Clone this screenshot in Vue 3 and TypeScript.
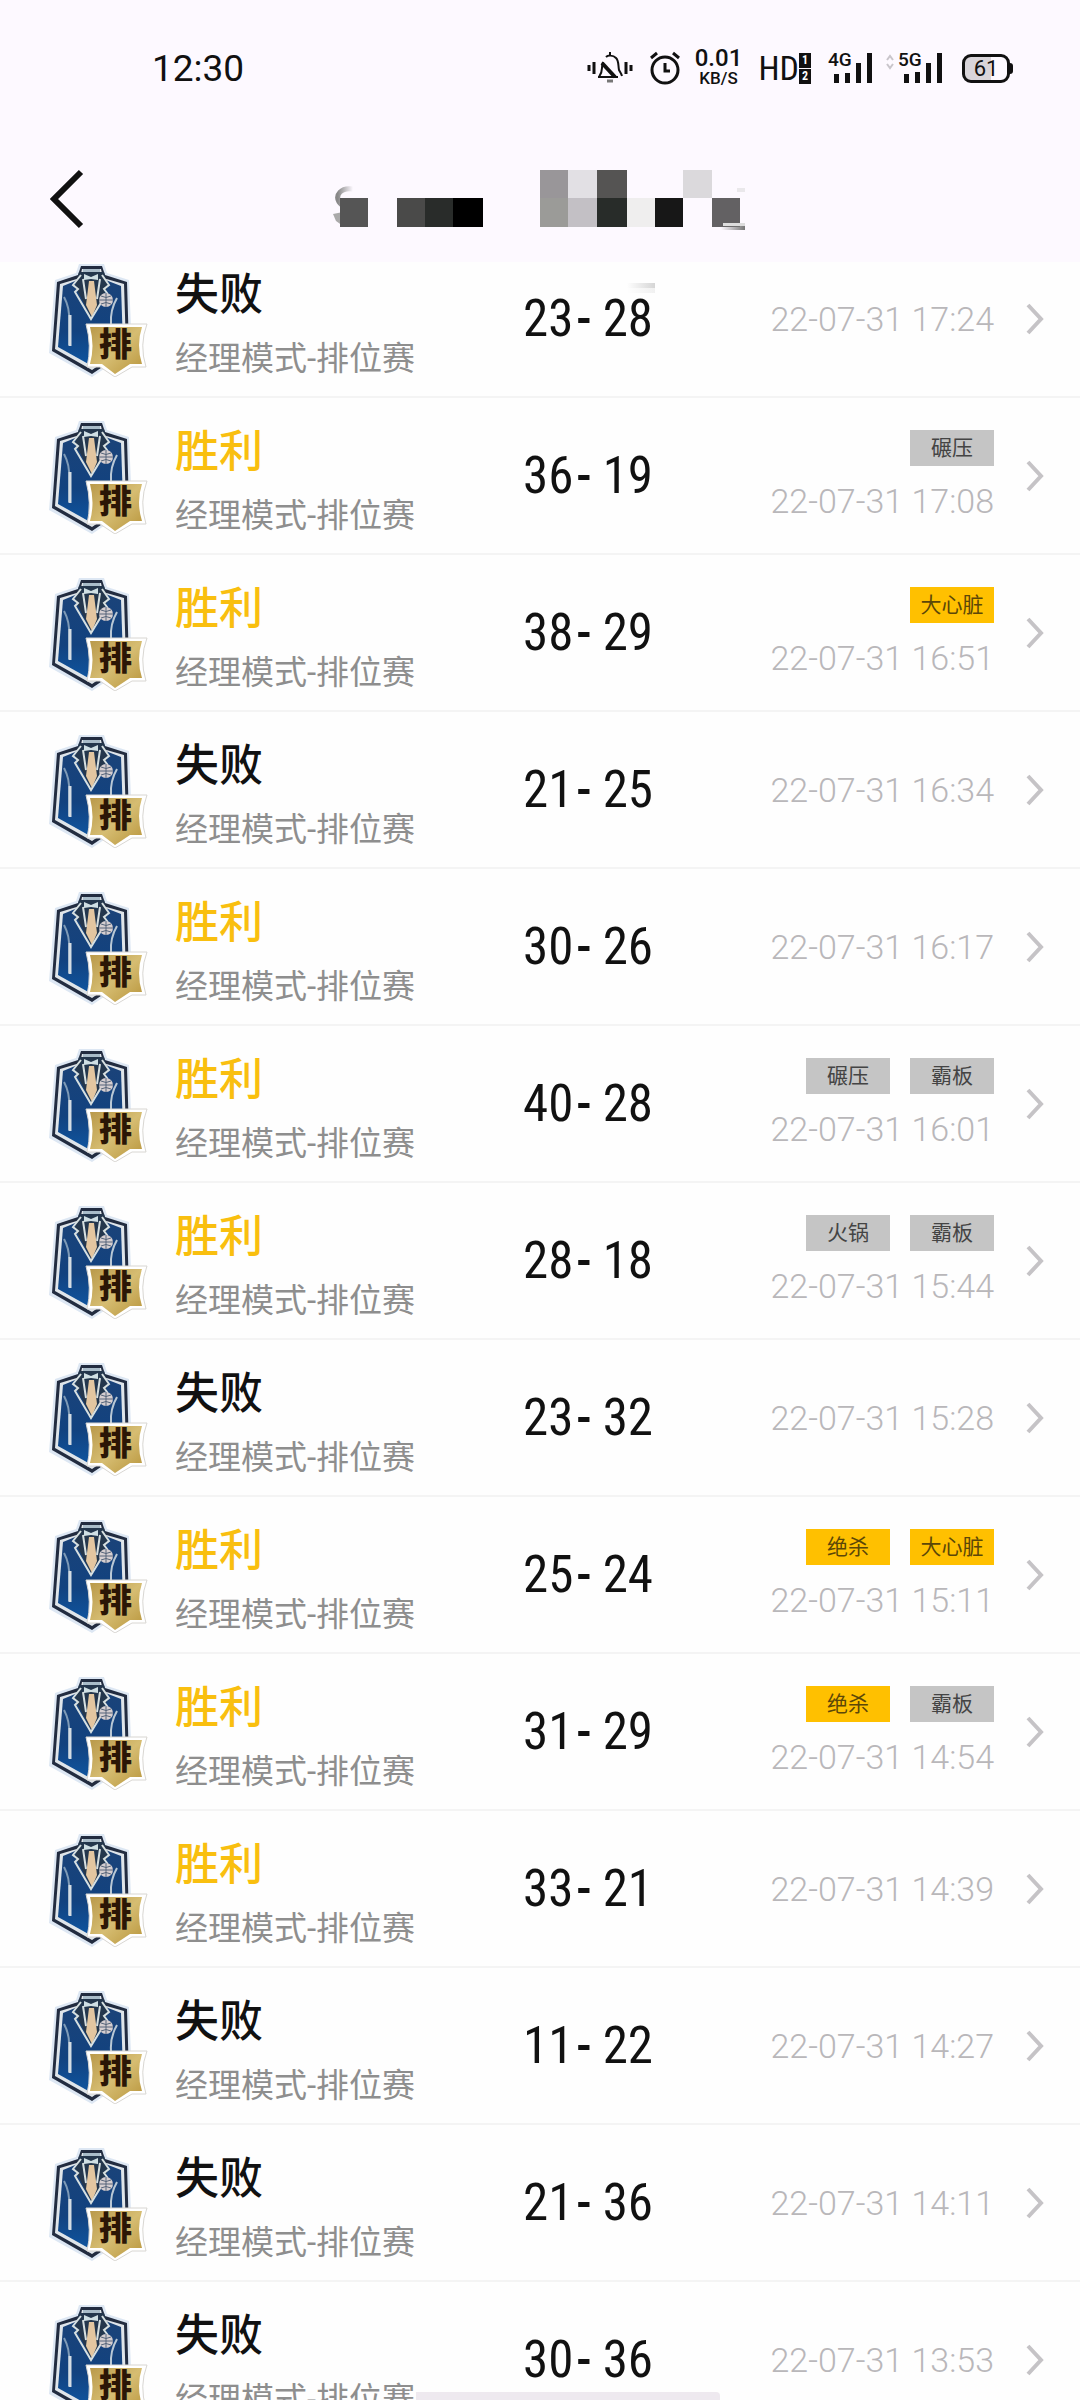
<script setup lang="ts">
interface Tag {
  label: string
  gold?: boolean
}
interface Match {
  win: boolean
  home: number
  away: number
  time: string
  tags: Tag[]
}

const crush: Tag = { label: '碾压' }
const board: Tag = { label: '霸板' }
const block: Tag = { label: '火锅' }
const heart: Tag = { label: '大心脏', gold: true }
const clutch: Tag = { label: '绝杀', gold: true }

const match = (win: boolean, home: number, away: number, time: string, tags: Tag[] = []): Match => ({
  win,
  home,
  away,
  time,
  tags,
})

const matches: Match[] = [
  match(false, 23, 28, '17:24'),
  match(true, 36, 19, '17:08', [crush]),
  match(true, 38, 29, '16:51', [heart]),
  match(false, 21, 25, '16:34'),
  match(true, 30, 26, '16:17'),
  match(true, 40, 28, '16:01', [crush, board]),
  match(true, 28, 18, '15:44', [block, board]),
  match(false, 23, 32, '15:28'),
  match(true, 25, 24, '15:11', [clutch, heart]),
  match(true, 31, 29, '14:54', [clutch, board]),
  match(true, 33, 21, '14:39'),
  match(false, 11, 22, '14:27'),
  match(false, 21, 36, '14:11'),
  match(false, 30, 36, '13:53'),
]
</script>

<template>
  <div class="screen">
    <header class="top">
      <div class="status">
        <time class="clock">12:30</time>
        <div class="indicators">
          <svg class="bell" width="46" height="34" viewBox="0 0 46 34" fill="none" stroke="#111" aria-label="静音">
            <path d="M2 14v6M44 14v6" stroke-width="3" />
            <path d="M7 11v12M39 11v12" stroke-width="3" />
            <path d="M11 26h20M12 26c2-3 3-5 3-9c0-2 0-4 1-6M19 6c2-2 7-2 10 1c3 3 2 7 3 12c1 2 2 3 3 6M23 1v4" stroke-width="2" />
            <path d="M15 12L28 26" stroke-width="4" />
            <path d="M20 30h6" stroke="#777" stroke-width="3" />
          </svg>
          <svg class="alarm" width="32" height="34" viewBox="0 0 32 34" fill="none" stroke="#111" aria-label="闹钟">
            <circle cx="16" cy="19" r="13" stroke-width="3" />
            <path d="M2 7L8 2M30 7L24 2M16 12v8h5" stroke-width="3" />
          </svg>
          <div class="speed"><span>0.01</span><small>KB/S</small></div>
          <div class="hd"><span>HD</span><span class="sims"><b>1</b><b>2</b></span></div>
          <div class="signal">
            <span>4G</span>
            <svg width="46" height="32" viewBox="0 0 46 32" fill="#111" aria-hidden="true">
              <path d="M6 22h5v9H6zM17 21h5v10h-5zM28 11h5v20h-5zM39 1h5v30h-5z" />
            </svg>
          </div>
          <div class="signal five">
            <svg class="arrows" width="8" height="16" viewBox="0 0 8 16" fill="none" stroke="#c9c5cb" stroke-width="2" aria-hidden="true">
              <path d="M1 6L4 2L7 6M1 10L4 14L7 10" />
            </svg>
            <span>5G</span>
            <svg width="46" height="32" viewBox="0 0 46 32" fill="#111" aria-hidden="true">
              <path d="M6 22h5v9H6zM17 20h5v11h-5zM28 11h5v20h-5zM39 1h5v30h-5z" />
            </svg>
          </div>
          <div class="battery">61</div>
        </div>
      </div>
      <nav class="bar">
        <button class="back" type="button" aria-label="返回">
          <svg width="34" height="60" viewBox="0 0 34 60" fill="none" stroke="#111" stroke-width="6">
            <path d="M31 3L4 30L31 57" />
          </svg>
        </button>
        <svg class="title" width="414" height="124" viewBox="0 0 414 124" shape-rendering="crispEdges" aria-hidden="true">
          <defs>
            <linearGradient id="fadeL" x1="0" x2="1">
              <stop offset="0" stop-color="#888" />
              <stop offset="1" stop-color="#888" stop-opacity="0" />
            </linearGradient>
            <linearGradient id="fadeR" x1="0" x2="1">
              <stop offset="0" stop-color="#777" stop-opacity="0" />
              <stop offset="1" stop-color="#777" />
            </linearGradient>
          </defs>
          <path d="M20 20C8 18 2 26 6 33C8 37 14 38 16 40" fill="none" stroke="url(#fadeL)" stroke-width="5" shape-rendering="auto" />
          <path d="M0 45L10 43V57L3 52z" fill="#aaa" shape-rendering="auto" />
          <path d="M7 29h28v29H7z" fill="#555" />
          <path d="M64 29h28v29H64z" fill="#4a4a49" />
          <path d="M92 29h28v29H92z" fill="#292c2a" />
          <path d="M120 29h30v29H120z" fill="#000" />
          <path d="M207 1h28v28H207z" fill="#999699" />
          <path d="M207 29h28v29H207z" fill="#9b9b98" />
          <path d="M235 1h29v28H235z" fill="#e2e0e4" />
          <path d="M235 29h29v29H235z" fill="#c3c0c5" />
          <path d="M264 1h30v28H264z" fill="#555453" />
          <path d="M264 29h30v29H264z" fill="#282c29" />
          <path d="M294 29h28v29H294z" fill="#efeeee" />
          <path d="M322 29h28v29H322z" fill="#171717" />
          <path d="M350 1h29v28H350z" fill="#dbd9dc" />
          <path d="M379 29h28v29H379z" fill="#636163" />
          <path d="M390 54h22v3H390z" fill="#ddd" />
          <path d="M388 57h24v4H388z" fill="url(#fadeR)" />
          <path d="M404 19h8v4H404z" fill="#eae8eb" />
          <path d="M294 114h28v5H294z" fill="url(#fadeR)" opacity="0.3" />
          <path d="M294 119h28v5H294z" fill="url(#fadeR)" opacity="0.1" />
        </svg>
      </nav>
    </header>

    <svg class="symbols" width="0" height="0" aria-hidden="true">
      <defs>
        <linearGradient id="suit" x1="0" y1="0" x2="0" y2="1">
          <stop offset="0" stop-color="#1b4379" />
          <stop offset="0.6" stop-color="#12427f" />
          <stop offset="1" stop-color="#0f55a0" />
        </linearGradient>
        <linearGradient id="gold" x1="0" y1="0" x2="1" y2="1">
          <stop offset="0" stop-color="#b9994a" />
          <stop offset="0.5" stop-color="#d6bd72" />
          <stop offset="1" stop-color="#b8953c" />
        </linearGradient>
        <symbol id="badge" viewBox="0 0 100 114">
          <path d="M31 1H56L59 10L81 17L84 87L44 114L1 90L7 17L28 10z" fill="#dde7f3" />
          <path d="M33 3H54L57 12L79 19L81 86L44 111L4 88L9 19L30 12z" fill="#222c40" />
          <path d="M34 6H53L55 15L76 21L78 84L44 107L7 86L12 21L32 15z" fill="#dfe5ea" />
          <path d="M32 16L15 23L10 84L44 103L75 82L73 23L55 16z" fill="url(#suit)" />
          <path d="M31 9h25l4 14l-16 33L27 23z" fill="#24374d" />
          <path d="M35 6h17v3H35z" fill="#a9bcc9" />
          <path d="M41 18h5L49 42L44 54L38 42z" fill="#e3c6a0" />
          <path d="M36 11l7 3l7-3v6l-7 -1l-7 1z" fill="#cfdfe4" />
          <path d="M33 12L25 22L30 26L27 29L43 56L59 30L56 26L61 22L54 12M35 16L38 36M52 16L49 36" fill="none" stroke="#d7e0e1" stroke-width="2" />
          <path d="M16 34Q22 45 21 58V82" fill="none" stroke="#7f9bb7" stroke-width="2" />
          <path d="M22 52v31" stroke="#d4dce3" stroke-width="3" />
          <path d="M69 35Q62 47 63 61" fill="none" stroke="#b9c8d5" stroke-width="2" />
          <circle cx="58" cy="37" r="7" fill="#d5ced0" />
          <path d="M51 37h14M58 30v14M53 33q5 3 10 0M53 41q5-3 10 0" fill="none" stroke="#56657a" stroke-width="1" />
          <path d="M38 61H99Q91 82 98 104H84L67 114L52 104H39Q44 83 38 61z" fill="#fff" stroke="#d8d6d2" stroke-width="1" />
          <path d="M42 64H94Q88 82 94 101H82L67 111L54 101H42Q47 83 42 64z" fill="url(#gold)" />
        </symbol>
      </defs>
    </svg>

    <main>
      <ul class="list">
        <li v-for="m in matches" :key="m.time">
          <a class="row" href="#">
            <span class="emblem">
              <svg width="100" height="114" aria-hidden="true"><use href="#badge" /></svg>
              <span class="rank">排</span>
            </span>
            <span class="info">
              <strong :class="{ win: m.win }">{{ m.win ? '胜利' : '失败' }}</strong>
              <span class="mode">经理模式-排位赛</span>
            </span>
            <span class="score"><span>{{ m.home }}</span><i>-</i><span>{{ m.away }}</span></span>
            <span class="meta">
              <span v-if="m.tags.length" class="tags">
                <span v-for="t in m.tags" :key="t.label" class="tag" :class="{ gold: t.gold }">{{ t.label }}</span>
              </span>
              <time>22-07-31 {{ m.time }}</time>
            </span>
            <svg class="arrow" width="18" height="32" viewBox="0 0 18 32" fill="none" stroke="#c5c3c6" stroke-width="4" aria-hidden="true">
              <path d="M2 2L15 16L2 30" />
            </svg>
          </a>
        </li>
      </ul>
    </main>
    <div class="home" />
  </div>
</template>

<style>
body {
  margin: 0;
}
</style>

<style scoped>
.screen {
  position: relative;
  height: 100vh;
  overflow: hidden;
  display: flex;
  flex-direction: column;
  background: #fefefe;
  color: #111;
  font-family: Roboto, "Noto Sans CJK SC", sans-serif;
}
.top {
  position: relative;
  z-index: 1;
  flex: none;
  background: #fdf9ff;
}
.status {
  display: flex;
  align-items: center;
  justify-content: space-between;
  height: 136px;
  padding: 0 70px 0 152px;
}
.clock {
  font-size: 37px;
}
.indicators {
  display: flex;
  align-items: center;
  height: 40px;
}
.alarm {
  margin-left: 16px;
}
.speed {
  display: flex;
  flex-direction: column;
  align-items: center;
  width: 48px;
  margin-left: 14px;
  font-size: 24px;
  font-weight: 500;
  line-height: 20px;
}
.speed small {
  font-size: 17px;
  line-height: 20px;
}
.hd {
  display: flex;
  align-items: center;
  margin-left: 16px;
  font-family: "Roboto Condensed", Roboto, sans-serif;
  font-size: 34px;
  line-height: 36px;
}
.sims {
  display: flex;
  flex-direction: column;
  gap: 1px;
}
.sims b {
  width: 12px;
  height: 15px;
  background: #111;
  color: #fff;
  font-size: 12px;
  line-height: 15px;
  text-align: center;
}
.signal {
  position: relative;
  display: flex;
  margin-left: 17px;
}
.signal span {
  position: absolute;
  top: 0;
  left: 0;
  font-size: 19px;
  font-weight: 500;
  line-height: 16px;
}
.five {
  margin-left: 24px;
}
.arrows {
  position: absolute;
  top: 2px;
  left: -12px;
}
.battery {
  position: relative;
  box-sizing: border-box;
  width: 48px;
  height: 29px;
  margin-left: 18px;
  border: 3px solid #111;
  border-radius: 9px;
  background: linear-gradient(to right, #d9d5da 61%, transparent 61%);
  font-size: 22px;
  line-height: 24px;
  text-align: center;
}
.battery::after {
  content: "";
  position: absolute;
  top: 6px;
  right: -6px;
  width: 3px;
  height: 11px;
  border-radius: 0 3px 3px 0;
  background: #111;
}
.bar {
  display: grid;
  grid-template-columns: 1fr auto 1fr;
  align-items: start;
  height: 126px;
}
.back {
  justify-self: start;
  display: flex;
  margin: 33px 0 0 50px;
  padding: 0;
  border: 0;
  background: none;
}
.title {
  margin-top: 33px;
}
.symbols {
  position: absolute;
}
main {
  flex: 1;
  min-height: 0;
  overflow: hidden;
}
.list {
  margin: -21px 0 0;
  padding: 0;
  list-style: none;
}
.row {
  display: grid;
  grid-template-columns: 100px 1fr 132px 1fr 18px;
  align-items: center;
  box-sizing: border-box;
  height: 157px;
  padding: 0 36px 0 48px;
  border-bottom: 2px solid #f4f4f4;
  color: inherit;
  text-decoration: none;
}
.emblem {
  position: relative;
  height: 112px;
}
.rank {
  position: absolute;
  top: 64px;
  left: 51px;
  color: #2b1606;
  font-size: 33px;
  font-weight: 900;
  line-height: 36px;
}
.info {
  display: flex;
  flex-direction: column;
  gap: 20px;
  padding: 12px 0 0 27px;
}
.info strong {
  font-size: 44px;
  font-weight: 500;
  line-height: 48px;
}
.info .win {
  color: #f9bf0f;
}
.mode {
  color: #8e8e8e;
  font-size: 33px;
  line-height: 40px;
  white-space: nowrap;
}
.score {
  display: grid;
  grid-template-columns: 53px 16px 1fr;
  padding-left: 2px;
  font-family: "Roboto Condensed", Roboto, sans-serif;
  font-size: 51px;
  line-height: 60px;
}
.score :last-child {
  text-align: right;
}
.score i {
  font-style: normal;
  font-weight: 500;
}
.meta {
  display: flex;
  flex-direction: column;
  align-items: flex-end;
  gap: 15px;
  padding: 0 32px 0 0;
  color: #b9b7ba;
  font-size: 34px;
  font-weight: 300;
  line-height: 40px;
  white-space: nowrap;
}
.tags {
  display: flex;
  gap: 20px;
}
.tag {
  width: 84px;
  height: 36px;
  background: #c5c5c5;
  color: #444;
  font-size: 21px;
  font-weight: 400;
  line-height: 36px;
  text-align: center;
}
.tag.gold {
  background: #ffc000;
  color: #5c4708;
}
.home {
  position: absolute;
  right: calc(50% - 180px);
  bottom: 0;
  width: 304px;
  height: 8px;
  border-radius: 0 4px 0 0;
  background: #eee9ef;
}
</style>
